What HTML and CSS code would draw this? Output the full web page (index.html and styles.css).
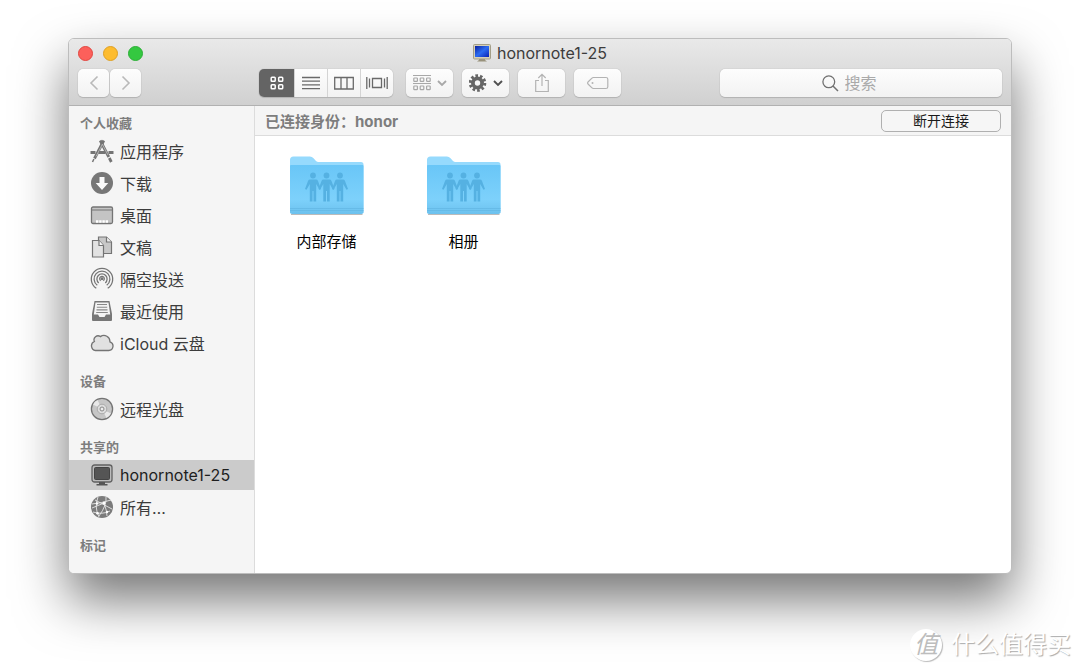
FILE: index.html
```html
<!DOCTYPE html>
<html lang="zh-CN">
<head>
<meta charset="utf-8">
<meta name="viewport" content="width=device-width, initial-scale=1">
<title>honornote1-25</title>
<link rel="stylesheet" href="styles.css">
</head>
<body>
<main class="window">
  <header class="titlebar">
    <div class="title-row">
      <div class="lights">
        <button class="light close" aria-label="关闭"></button>
        <button class="light minimise" aria-label="最小化"></button>
        <button class="light full" aria-label="全屏"></button>
      </div>
      <h1 class="title">
        <svg width="18" height="18" viewBox="0 0 18 18" aria-hidden="true">
          <defs><linearGradient id="screen" x1="0" y1="0" x2="1" y2="1"><stop offset="0" stop-color="#0a1f9c"/><stop offset=".5" stop-color="#2c6cf2"/><stop offset="1" stop-color="#0a22b4"/></linearGradient></defs>
          <path d="M6 14h6v2l2 1.500H4L6 16z" fill="#98917b"/>
          <rect x=".5" y=".5" width="17" height="14.500" rx="1" fill="#d6d0b8" stroke="#a39e88"/>
          <rect x="2" y="2" width="14" height="11" fill="url(#screen)"/>
        </svg>
        <span>honornote1-25</span>
      </h1>
    </div>
    <div class="toolbar">
      <div class="history">
        <button class="tool step" aria-label="后退"><svg width="10" height="16" viewBox="0 0 10 16"><path d="M8.500 1.500L2 8l6.500 6.500" fill="none" stroke="#b9b9b9" stroke-width="1.600"/></svg></button>
        <button class="tool step" aria-label="前进"><svg width="10" height="16" viewBox="0 0 10 16"><path d="M1.500 1.500L8 8l-6.500 6.500" fill="none" stroke="#b9b9b9" stroke-width="1.600"/></svg></button>
      </div>
      <div class="views">
        <button class="view active" aria-label="图标"><svg width="14" height="14" viewBox="0 0 14 14" fill="none" stroke="#fff" stroke-width="1.500"><rect x="1.200" y="1.200" width="4" height="4" rx=".8"/><rect x="8.700" y="1.200" width="4" height="4" rx=".8"/><rect x="1.200" y="8.700" width="4" height="4" rx=".8"/><rect x="8.700" y="8.700" width="4" height="4" rx=".8"/></svg></button>
        <button class="view" aria-label="列表"><svg width="18" height="14" viewBox="0 0 18 14"><path d="M0 1.500h18M0 5.200h18M0 8.900h18M0 12.600h18" stroke="#696969" stroke-width="1.300"/></svg></button>
        <button class="view" aria-label="分栏"><svg width="20" height="14" viewBox="0 0 20 14"><path d="M.7 1.500h18.600v11.500H.7zM7 1.500V13M13 1.500V13" fill="none" stroke="#696969" stroke-width="1.300"/></svg></button>
        <button class="view" aria-label="封面流"><svg width="22" height="14" viewBox="0 0 22 14"><path d="M6.500 2.500h9v9h-9zM.8 1v12M3.500 2.500v9M18.500 2.500v9M21.200 1v12" fill="none" stroke="#696969" stroke-width="1.300"/></svg></button>
      </div>
      <button class="tool" aria-label="排列"><svg width="34" height="18" viewBox="0 0 34 18" fill="none" stroke="#a8a8a8" stroke-width="1.200"><path d="M0 1.500h18M0 9.500h18"/><rect x=".8" y="4" width="3.600" height="3.400" rx=".6"/><rect x="7.200" y="4" width="3.600" height="3.400" rx=".6"/><rect x="13.600" y="4" width="3.600" height="3.400" rx=".6"/><rect x=".8" y="12" width="3.600" height="3.600" rx=".6"/><rect x="7.200" y="12" width="3.600" height="3.600" rx=".6"/><rect x="13.600" y="12" width="3.600" height="3.600" rx=".6"/><path d="M25 7l4 4 4-4" stroke-width="1.800"/></svg></button>
      <button class="tool" aria-label="操作"><svg width="34" height="18" viewBox="0 0 34 18"><g fill="none" stroke="#666"><circle cx="8.500" cy="9" r="4.600" stroke-width="3.800"/><circle cx="8.500" cy="9" r="7.300" stroke-width="3" stroke-dasharray="2.600 1.987"/><path d="M25 7l4 4 4-4" stroke="#505050" stroke-width="1.900"/></g></svg></button>
      <button class="tool" aria-label="共享"><svg width="16" height="20" viewBox="0 0 16 20"><path d="M5 7.500H1.700v11h12.600v-11H11M8 13V1.500M4.300 5L8 1.300 11.700 5" fill="none" stroke="#b3b3b3" stroke-width="1.200"/></svg></button>
      <button class="tool" aria-label="编辑标记"><svg width="22" height="14" viewBox="0 0 22 14"><path d="M6.500 1.500h12.500q1.800 0 1.800 1.800v7.400q0 1.800-1.800 1.800H6.500Q5.500 12.500 4.700 11.700L1 8Q.2 7 1 6L4.700 2.300Q5.500 1.500 6.500 1.500z" fill="none" stroke="#b3b3b3" stroke-width="1.200"/><circle cx="5.500" cy="7" r="1" fill="#b3b3b3"/></svg></button>
      <label class="search">
        <svg width="17" height="17" viewBox="0 0 17 17"><circle cx="6.800" cy="6.800" r="5.900" fill="none" stroke="#717171" stroke-width="1.300"/><path d="M11 11l5 5" stroke="#717171" stroke-width="1.500"/></svg>
        <input type="search" placeholder="搜索" aria-label="搜索">
      </label>
    </div>
  </header>

  <div class="body">
    <nav class="sidebar">
      <section>
        <h2>个人收藏</h2>
        <ul>
          <li><a href="#apps"><svg viewBox="0 0 24 24"><g fill="none" stroke="#747474"><path d="M.5 13.500h5M8.500 13.500h7M18.500 13.500h5" stroke-width="3"/><path d="M13.800 1.500L4.500 19.500" stroke-width="2.800"/><path d="M3.900 20L2.500 23" stroke-width="1.500"/><path d="M10.200 1.500L18.800 18" stroke-width="2.800"/><path d="M19.300 19l2 4" stroke-width="2.800"/></g><path d="M12.500 5L6 17.500M12.500 5.500l5.500 10.500" stroke="#cfcfcf" stroke-width=".7"/></svg>应用程序</a></li>
          <li><a href="#downloads"><svg viewBox="0 0 24 24"><circle cx="12" cy="12" r="11" fill="#777"/><path d="M9.500 6h5v6h3.800L12 19l-6.300-7h3.800z" fill="#fafafa"/></svg>下载</a></li>
          <li><a href="#desktop"><svg viewBox="0 0 24 24"><rect x="1.500" y="4" width="21" height="16.500" rx="1.500" fill="#c4c4c4" stroke="#747474" stroke-width="1.300"/><path d="M2 7h20" stroke="#747474"/><path d="M6 18.500h12" stroke="#fff" stroke-width="2.400" stroke-dasharray="2.400 .8"/></svg>桌面</a></li>
          <li><a href="#documents"><svg viewBox="0 0 24 24" stroke="#747474" stroke-width="1.200"><path d="M8.500 2h8l5 5v11.500h-13z" fill="#c8c8c8"/><path d="M16.500 2v5h5" fill="#eee"/><path d="M2.500 5.500H9l4.500 5v11.500h-11z" fill="#e2e2e2"/><path d="M9 5.500v5h4.500" fill="#f7f7f7"/></svg>文稿</a></li>
          <li><a href="#airdrop"><svg viewBox="0 0 24 24" fill="none" stroke="#747474" stroke-width="1.300"><path d="M6.300 21.200a10.700 10.700 0 1 1 11.400 0M7.300 18.300a7.900 7.900 0 1 1 9.400 0M8.700 15.900a5.100 5.100 0 1 1 6.600 0M10.700 13.600a2.300 2.300 0 1 1 2.600 0"/><circle cx="12" cy="11.800" r=".8" fill="#747474"/></svg>隔空投送</a></li>
          <li><a href="#recents"><svg viewBox="0 0 24 24"><path d="M4.500 2h15l2.500 13v6q0 1-1 1H3q-1 0-1-1v-6z" fill="#777"/><path d="M5.500 3.500h13l1.700 12h-4.200l-1.500 2.500h-5L8 15.500H3.800z" fill="#f4f4f4"/><path d="M7 5.500h10M6.800 8.200h10.400M6.500 10.900h11M6.200 13.500h11.600" stroke="#888" stroke-width="1.100"/></svg>最近使用</a></li>
          <li><a href="#icloud"><svg viewBox="0 0 24 24"><path d="M5.500 19.500h13.200a4.400 4.400 0 0 0 1.200-8.600 6 6 0 0 0-9.500-5.300 4 4 0 0 0-6 4.900 4.700 4.700 0 0 0 1.100 9z" fill="#e1e1e1" stroke="#747474" stroke-width="1.300"/></svg>iCloud 云盘</a></li>
        </ul>
      </section>
      <section>
        <h2>设备</h2>
        <ul>
          <li><a href="#disc"><svg viewBox="0 0 24 24"><circle cx="12" cy="12" r="10.600" fill="#c6c6c6" stroke="#747474" stroke-width="1.300"/><path d="M12 12L3 7.500A10 10 0 0 1 7.500 3zM12 12l9 4.500A10 10 0 0 1 16.500 21z" fill="#e9e9e9"/><circle cx="12" cy="12" r="4.800" fill="#ddd" stroke="#aaa"/><circle cx="12" cy="12" r="2" fill="#eee" stroke="#888"/></svg>远程光盘</a></li>
        </ul>
      </section>
      <section>
        <h2>共享的</h2>
        <ul>
          <li><a class="selected" href="#honornote" aria-current="page"><svg viewBox="0 0 24 24"><rect x="2" y="2" width="20" height="17" rx="2.500" fill="#bbb" stroke="#626262" stroke-width="1.300"/><rect x="4.500" y="4.500" width="15" height="12" rx="1" fill="#555" stroke="#444"/><path d="M9 19h6v2h2.500v1.500h-11V21H9z" fill="#555"/></svg>honornote1-25</a></li>
          <li><a href="#all"><svg viewBox="0 0 24 24"><circle cx="12" cy="12" r="11" fill="#7b7b7b"/><g fill="none" stroke="#e7e7e7" stroke-width=".9"><path d="M2 9q10-1 19-4M3 17q9 3 17-1M8 2q-4 10 1 20M16 2q1 8-7 19M5 5l17 9M14 8q3 8 3 13M2 13l12-5"/></g><g fill="#fff"><circle cx="14" cy="8" r="1.500"/><circle cx="7" cy="8.500" r="1.200"/><circle cx="7.500" cy="18.200" r="1.300"/><circle cx="17" cy="17" r="1.200"/></g></svg>所有…</a></li>
        </ul>
      </section>
      <section>
        <h2>标记</h2>
      </section>
    </nav>

    <section class="content">
      <div class="status">
        <span>已连接身份：honor</span>
        <button class="disconnect">断开连接</button>
      </div>
      <div class="files">
        <a class="folder" href="#internal">
          <svg width="76" height="62" viewBox="0 0 76 62" aria-hidden="true">
            <defs>
              <linearGradient id="front" x1="0" y1="0" x2="0" y2="1"><stop offset="0" stop-color="#69c6f7"/><stop offset=".7" stop-color="#7dd1fb"/><stop offset="1" stop-color="#6cc1ee"/></linearGradient>
              <g id="person"><circle cx="0" cy="20.500" r="2.900"/><path d="M-3 24.500h6q1.500 0 2 1.400l3 8-1.500.9L3.200 29v17.500H.5V36h-1v10.500h-2.700V29l-3.300 5.800-1.500-.9 3-8q.5-1.400 2-1.400z"/></g>
              <g id="shared-folder">
                <path d="M1 58V5q0-3.500 3.500-3.500H21q2 0 3.300 1.500l2.700 3q1 1 2.500 1H72q2.500 0 2.500 2.500V58z" fill="#96dafd"/>
                <path d="M1 11q0-1 1-1h71.500q1 0 1 1v46q0 2-2 2H3q-2 0-2-2z" fill="url(#front)"/>
                <path d="M1 53.500h73.500M1 55.500h73.500" stroke="#62b6e3" stroke-width=".7"/>
                <path d="M2 59.500h71.500" stroke="#aaa" stroke-width=".8"/>
                <g fill="#55b1e2"><use href="#person" x="24"/><use href="#person" x="37.500"/><use href="#person" x="51"/></g>
              </g>
            </defs>
            <use href="#shared-folder"/>
          </svg>
          <span>内部存储</span>
        </a>
        <a class="folder" href="#photos">
          <svg width="76" height="62" viewBox="0 0 76 62" aria-hidden="true"><use href="#shared-folder"/></svg>
          <span>相册</span>
        </a>
      </div>
    </section>
  </div>
</main>
<footer class="watermark"><span class="seal">值</span><span>什么值得买</span></footer>
</body>
</html>
```
FILE: styles.css
```css
* {
  box-sizing: border-box;
}

body {
  margin: 0;
  min-height: 100vh;
  padding: 38px 68px 97px;
  display: flex;
  background: #fff;
  font-family: Inter, "Noto Sans CJK SC", sans-serif;
  font-size: 16px;
  color: #3c3c3c;
}

button,
input {
  font: inherit;
  color: inherit;
}

a {
  color: inherit;
  text-decoration: none;
}

svg {
  display: block;
  flex: none;
}

.window {
  flex: 1;
  min-width: 0;
  display: flex;
  flex-direction: column;
  border: 1px solid #bdbdbd;
  border-radius: 6px;
  overflow: hidden;
  background: #fff;
  box-shadow: 0 26px 52px rgba(0, 0, 0, .54);
}

.titlebar {
  padding: 0 9px 8px;
  background: linear-gradient(#e9e9e9, #d0d0d0);
  border-bottom: 1px solid #b1b1b1;
}

.title-row {
  display: grid;
  grid-template-columns: 1fr auto 1fr;
  align-items: center;
  height: 28px;
  margin-bottom: 2px;
}

.lights {
  display: flex;
  gap: 10px;
}

.light {
  width: 15px;
  height: 15px;
  padding: 0;
  border: 1px solid #e2463f;
  border-radius: 50%;
  background: #fc605b;
}

.minimise {
  border-color: #dfa023;
  background: #fdbc2f;
}

.full {
  border-color: #2caf36;
  background: #34c840;
}

.title {
  display: flex;
  align-items: center;
  gap: 6px;
  margin: 0;
  font-size: 16px;
  font-weight: 400;
  line-height: 20px;
}

.toolbar {
  display: flex;
  gap: 9px;
  height: 28px;
}

.history {
  display: flex;
  gap: 1px;
  margin-right: 109px;
}

.tool,
.view {
  display: flex;
  align-items: center;
  justify-content: center;
  padding: 0;
  border: 0;
  background: linear-gradient(#fdfdfd, #f2f2f2);
}

.tool {
  width: 47px;
  border-radius: 5px;
  box-shadow: 0 0 1px #999, 0 1px 1px #b4b4b4;
}

.step {
  width: 31px;
}

.views {
  display: flex;
  margin-right: 4px;
  border-radius: 5px;
  overflow: hidden;
  box-shadow: 0 0 1px #999, 0 1px 1px #b4b4b4;
}

.view {
  width: 33px;
  border-left: 1px solid #d4d4d4;
}

.view.active {
  width: 35px;
  border: 0;
  background: #646464;
}

.search {
  display: flex;
  align-items: center;
  gap: 6px;
  width: 282px;
  min-width: 0;
  margin-left: auto;
  border-radius: 5px;
  background: linear-gradient(#fdfdfd, #f2f2f2);
  box-shadow: 0 0 1px #999, 0 1px 1px #b4b4b4;
}

.search svg {
  margin-left: 36%;
}

.search input {
  flex: 1;
  min-width: 0;
  padding: 0;
  border: 0;
  outline: 0;
  background: none;
}

.search input::placeholder {
  color: #a9a9a9;
}

.body {
  flex: 1;
  display: flex;
}

.sidebar {
  flex: none;
  width: 186px;
  display: flex;
  flex-direction: column;
  gap: 10px;
  padding: 4px 0 12px;
  border-right: 1px solid #dcdcdc;
  background: #f5f5f5;
}

.sidebar h2 {
  margin: 0;
  padding-left: 11px;
  font-size: 13px;
  font-weight: 700;
  line-height: 26px;
  color: #7d7d7d;
}

.sidebar ul {
  display: grid;
  gap: 2px;
  margin: 0;
  padding: 0;
  list-style: none;
}

.sidebar a {
  display: flex;
  align-items: center;
  gap: 6px;
  height: 30px;
  padding-left: 21px;
  white-space: nowrap;
}

.sidebar a svg {
  width: 24px;
  height: 24px;
}

.sidebar .selected {
  background: #cbcbcb;
  color: #1e1e1e;
}

.content {
  flex: 1;
  min-width: 0;
}

.status {
  display: flex;
  align-items: center;
  justify-content: space-between;
  height: 30px;
  padding: 0 10px;
  border-bottom: 1px solid #dcdcdc;
  background: #f5f5f5;
  font-size: 15px;
  font-weight: 700;
  color: #7d7d7d;
}

.disconnect {
  width: 120px;
  height: 22px;
  padding: 0;
  border: 1px solid #b0b0b0;
  border-radius: 5px;
  background: #f6f6f6;
  font-size: 14px;
  font-weight: 400;
  line-height: 20px;
  color: #1a1a1a;
}

.files {
  display: flex;
  flex-wrap: wrap;
  padding: 19px 3px;
}

.folder {
  display: flex;
  flex-direction: column;
  align-items: center;
  gap: 14px;
  width: 137px;
  font-size: 15px;
  line-height: 22px;
  color: #000;
}

.watermark {
  position: absolute;
  right: 9px;
  bottom: 10px;
  display: flex;
  align-items: center;
  gap: 9px;
  font-size: 24px;
  line-height: 32px;
  color: #fff;
  text-shadow: 1px 1px 1px #aaa;
}

.seal {
  width: 32px;
  height: 32px;
  border-radius: 50%;
  background: #fff;
  box-shadow: 1px 1px 1px #bbb;
  color: #bdbdbd;
  font-style: italic;
  text-align: center;
  text-shadow: none;
}
```
